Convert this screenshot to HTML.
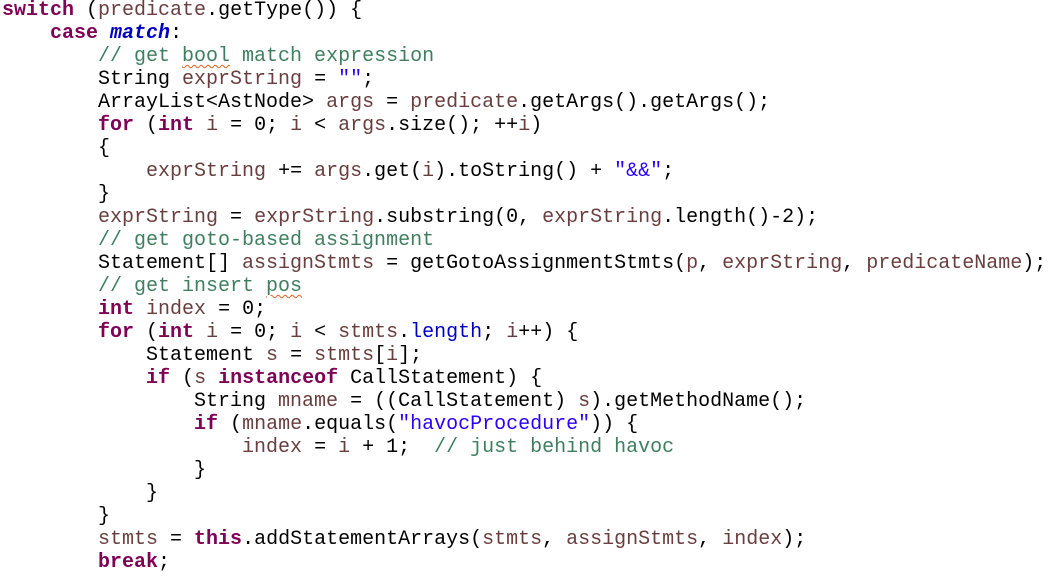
<!DOCTYPE html>
<html><head><meta charset="utf-8"><style>
html,body{margin:0;padding:0;background:#fff;width:1051px;height:582px;overflow:hidden}
pre{position:absolute;left:2px;top:-1px;margin:0;font-family:"Liberation Mono",monospace;font-size:20px;line-height:23px;color:#000}
.k{color:#7f0055;font-weight:bold}
.c{color:#3f7f5f}
.s{color:#2a00ff}
.f{color:#0000c0}
.fi{color:#0000c0;font-weight:bold;font-style:italic}
.v{color:#6a3e3e}
.u{text-decoration:underline wavy #e06020;text-decoration-thickness:1px;text-underline-offset:3px}
</style></head><body><pre><span class="k">switch</span> (<span class="v">predicate</span>.getType()) {
    <span class="k">case</span> <span class="fi">match</span>:
        <span class="c">// get <span class="u">bool</span> match expression</span>
        String <span class="v">exprString</span> = <span class="s">""</span>;
        ArrayList&lt;AstNode&gt; <span class="v">args</span> = <span class="v">predicate</span>.getArgs().getArgs();
        <span class="k">for</span> (<span class="k">int</span> <span class="v">i</span> = 0; <span class="v">i</span> &lt; <span class="v">args</span>.size(); ++<span class="v">i</span>)
        {
            <span class="v">exprString</span> += <span class="v">args</span>.get(<span class="v">i</span>).toString() + <span class="s">"&amp;&amp;"</span>;
        }
        <span class="v">exprString</span> = <span class="v">exprString</span>.substring(0, <span class="v">exprString</span>.length()-2);
        <span class="c">// get goto-based assignment</span>
        Statement[] <span class="v">assignStmts</span> = getGotoAssignmentStmts(<span class="v">p</span>, <span class="v">exprString</span>, <span class="v">predicateName</span>);
        <span class="c">// get insert <span class="u">pos</span></span>
        <span class="k">int</span> <span class="v">index</span> = 0;
        <span class="k">for</span> (<span class="k">int</span> <span class="v">i</span> = 0; <span class="v">i</span> &lt; <span class="v">stmts</span>.<span class="f">length</span>; <span class="v">i</span>++) {
            Statement <span class="v">s</span> = <span class="v">stmts</span>[<span class="v">i</span>];
            <span class="k">if</span> (<span class="v">s</span> <span class="k">instanceof</span> CallStatement) {
                String <span class="v">mname</span> = ((CallStatement) <span class="v">s</span>).getMethodName();
                <span class="k">if</span> (<span class="v">mname</span>.equals(<span class="s">"havocProcedure"</span>)) {
                    <span class="v">index</span> = <span class="v">i</span> + 1;  <span class="c">// just behind havoc</span>
                }
            }
        }
        <span class="v">stmts</span> = <span class="k">this</span>.addStatementArrays(<span class="v">stmts</span>, <span class="v">assignStmts</span>, <span class="v">index</span>);
        <span class="k">break</span>;
</pre></body></html>
